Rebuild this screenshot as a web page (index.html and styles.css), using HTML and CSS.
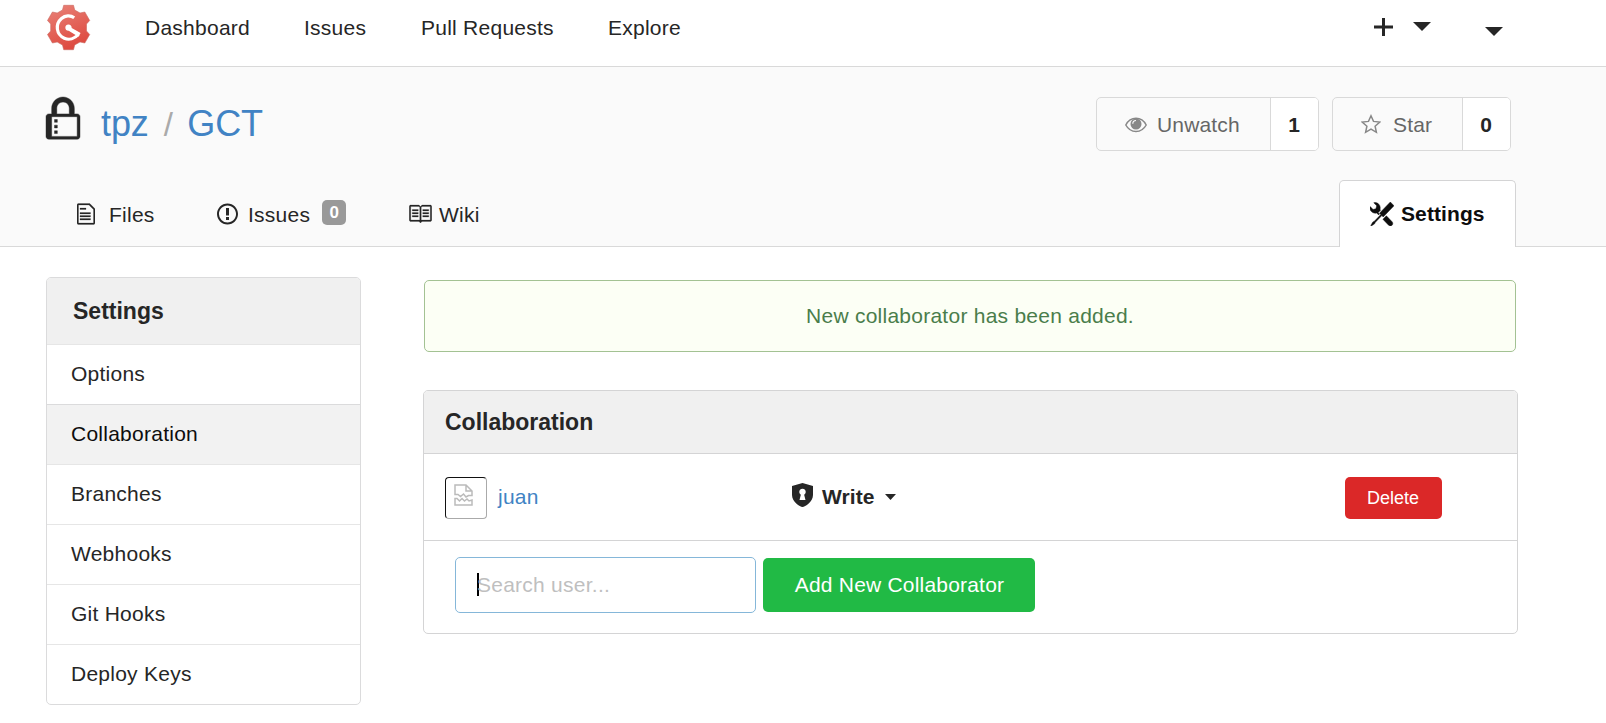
FILE: index.html
```html
<!DOCTYPE html>
<html lang="en">
<head>
<meta charset="utf-8">
<title>tpz/GCT - Collaboration</title>
<link rel="stylesheet" href="styles.css">
</head>
<body>
<nav class="navbar">
  <svg class="logo" viewBox="6 4 45 47">
    <defs><linearGradient id="red" x1="0" y1="0" x2="0.4" y2="1"><stop offset="0" stop-color="#e98379"/><stop offset="1" stop-color="#de4b41"/></linearGradient></defs>
    <path fill="url(#red)" stroke="#c9685f" stroke-width=".6" d="M23.700 5.300h9.800l1.200 4.700 5.300 3 4.800-1 4.900 8.500-3.200 3.500v7l3.200 3.500-4.900 8.500-4.800-1-5.300 3-1.200 4.700h-9.800l-1.200-4.700-5.300-3-4.800 1-4.900-8.500 3.200-3.500v-7l-3.200-3.500 4.900-8.500 4.800 1 5.300-3z"/>
    <path fill="none" stroke="#fff" stroke-width="3.200" d="M34.200 17.700C30.500 15 25.200 15.300 21.500 18.400C14.800 24.200 16.300 34.600 24.300 38.200C29 40.200 34.500 38.900 38.400 34.200"/>
    <path fill="#fff" d="M28.400 24.400a3.200 3.200 0 0 1 3.300 3.500l8.900 5.200-2.200 3.700-9.700-6a3.200 3.200 0 1 1-.3-6.400z"/>
  </svg>
  <a class="n-dash">Dashboard</a><a class="n-issues">Issues</a><a class="n-pulls">Pull Requests</a><a class="n-explore">Explore</a>
  <div class="nav-right">
    <svg class="plus" viewBox="0 0 19 18"><path d="M8 0h3v7.500h8v3h-8V18H8v-7.500H0v-3h8z"/></svg>
    <svg class="caret" viewBox="0 0 18 9"><path d="M0 0h18L9 9z"/></svg>
    <svg class="caret low" viewBox="0 0 18 9"><path d="M0 0h18L9 9z"/></svg>
  </div>
</nav>
<header class="repo">
  <div class="repo-top">
    <svg class="lock" viewBox="0 0 12 16" preserveAspectRatio="none"><path stroke="currentColor" stroke-width=".15" d="M4 13H3v-1h1v1zm8-6v7c0 .55-.45 1-1 1H1c-.55 0-1-.45-1-1V7c0-.55.45-1 1-1h1V4c0-2.200 1.800-4 4-4s4 1.800 4 4v2h1c.55 0 1 .45 1 1zM3.800 6h4.410V4c0-1.220-.98-2.200-2.200-2.200-1.220 0-2.200.98-2.200 2.200v2H3.800zM11 7H2v7h9V7zM4 8H3v1h1V8zm0 2H3v1h1v-1z"/></svg>
    <div class="repo-name"><a class="owner">tpz</a><span class="slash">/</span><a>GCT</a></div>
    <div class="repo-buttons">
      <div class="labeled watch"><span class="main">
        <svg class="eye" viewBox="0 0 22 16"><path fill="none" stroke="#888" stroke-width="1.500" d="M.8 8C5.500-1 16.500-1 21.200 8 16.500 16.600 5.500 16.600.8 8z"/><circle cx="11" cy="7" r="5.500" fill="#888"/><path fill="none" stroke="#fafafa" stroke-width="1.200" d="M7.800 6.800c0-2 1.300-3.300 3.200-3.300"/></svg>
        Unwatch</span><b>1</b></div>
      <div class="labeled star"><span class="main">
        <svg class="star-icon" viewBox="0 0 20 20"><path fill="none" stroke="#888" stroke-width="1.500" d="M10 1.800l2.500 5.600 6.300.7-4.700 4.100 1.300 6.100-5.400-3.100-5.400 3.100 1.300-6.100L1.200 8.100l6.300-.7z"/></svg>
        Star</span><b>0</b></div>
    </div>
  </div>
  <div class="tabs">
    <a class="tab t-files"><svg viewBox="0 0 12 16" width="18" height="24"><path stroke="currentColor" stroke-width=".15" d="M6 5H2V4h4v1zM2 8h7V7H2v1zm0 2h7V9H2v1zm0 2h7v-1H2v1zm10-7.500V14c0 .55-.45 1-1 1H1c-.55 0-1-.45-1-1V2c0-.55.45-1 1-1h7.500L12 4.500zM11 5L8 2H1v12h10V5z"/></svg>Files</a>
    <a class="tab t-issues"><svg viewBox="0 0 14 16" width="21" height="24"><path d="M7 2.300c3.140 0 5.700 2.560 5.700 5.700s-2.560 5.700-5.700 5.700A5.710 5.710 0 0 1 1.300 8c0-3.140 2.560-5.700 5.700-5.700zM7 1C3.140 1 0 4.140 0 8s3.140 7 7 7 7-3.140 7-7-3.140-7-7-7zm1 3H6v5h2V4zm0 6H6v2h2v-2z"/></svg>Issues<span class="count">0</span></a>
    <a class="tab t-wiki"><svg viewBox="1 0 15 16" width="23" height="24"><path stroke="currentColor" stroke-width=".15" d="M3 5h4v1H3V5zm0 3h4V7H3v1zm0 2h4V9H3v1zm11-5h-4v1h4V5zm0 2h-4v1h4V7zm0 2h-4v1h4V9zm2-6v9c0 .55-.45 1-1 1H9.500l-1 1-1-1H2c-.55 0-1-.45-1-1V3c0-.55.45-1 1-1h5.500l1 1 1-1H15c.55 0 1 .45 1 1zm-8 .5L7.500 3H2v9h6V3.500zm7-.5H9.500l-.5.5V12h6V3z"/></svg>Wiki</a>
    <a class="tab active"><svg viewBox="0 0 16 16" width="24" height="24"><path stroke="currentColor" stroke-width=".3" d="M4.480 7.270c.26.26 1.280 1.330 1.280 1.330l.56-.58-.88-.91 1.690-1.800s-.76-.74-.43-.45c.32-1.190.03-2.510-.87-3.440C4.930.5 3.660.2 2.520.51l1.930 2-.51 1.960-1.890.52-1.930-1.990C-.19 4.170.1 5.480 1 6.400c.94.98 2.290 1.260 3.480.87zm6.440 1.940l-2.330 2.300 3.840 3.980c.31.33.73.49 1.140.49.41 0 .82-.16 1.140-.49.63-.65.63-1.700 0-2.350l-3.790-3.930zM16 2.530L13.550 0 6.330 7.460l.88.91-4.310 4.460-.99.53-1.390 2.270.35.37 2.200-1.440.51-1.020L7.900 9.080l.88.91L16 2.530z"/></svg>Settings</a>
  </div>
</header>
<main class="content">
  <aside class="menu">
    <h4>Settings</h4>
    <a>Options</a><a class="active">Collaboration</a><a>Branches</a><a>Webhooks</a><a>Git Hooks</a><a>Deploy Keys</a>
  </aside>
  <section class="column">
    <div class="message">New collaborator has been added.</div>
    <div class="panel">
      <h4>Collaboration</h4>
      <div class="row">
        <span class="avatar"><svg viewBox="0 0 19 22" width="19" height="22"><g fill="none" stroke="#bbb" stroke-width="1.500"><path d="M1 10.500V1h11l6 6v4.500h-3.500L12 13 9.500 10 6.500 12.500 4 10.500zM12 1v6h6M1 21v-6.500h2l2.500 2.500 2.500-2.500 2.500 2.500 2.500-2 2 2 3-1V21z"/></g></svg></span>
        <a class="user">juan</a>
        <div class="access">
          <svg class="shield" viewBox="0 0 14 16"><path fill-rule="evenodd" d="M7 0L0 2v6.020C0 12.690 5.310 16 7 16s7-3.310 7-7.980V2zM5 11.300l.9-3.500a2.150 2.150 0 1 1 2.200 0l.9 3.500z"/></svg>
          <span>Write</span>
          <svg class="small-caret" viewBox="0 0 11 6"><path d="M0 0h11L5.500 6z"/></svg>
        </div>
        <button class="delete">Delete</button>
      </div>
      <div class="add-row">
        <div class="search"><i class="cursor"></i><span>Search user...</span></div>
        <button class="add">Add New Collaborator</button>
      </div>
    </div>
  </section>
</main>
</body>
</html>
```
FILE: styles.css
```css
* { box-sizing: border-box; }
body { margin: 0; height: 723px; overflow: hidden; background: #fff; color: #262626; font: 21px/24px "Liberation Sans", Arial, sans-serif; letter-spacing: .25px; }
svg { display: block; flex: none; fill: currentColor; }
h4 { margin: 0; font-size: 23px; letter-spacing: 0; background: #f0f0f0; }
button { border: 0; border-radius: 5px; color: #fff; font-family: inherit; letter-spacing: inherit; padding: 0; }

.navbar { display: flex; height: 67px; border-bottom: 1px solid #d9d9d9; line-height: 55px; padding-left: 46px; }
.logo { width: 45px; height: 47px; margin: 4px 54px 0 0; }
.n-dash { width: 159px; }
.n-issues { width: 117px; }
.n-pulls { width: 187px; }
.nav-right { display: flex; margin-left: auto; padding-right: 103px; }
.plus { width: 19px; height: 18px; margin-top: 18px; }
.caret { width: 18px; height: 9px; margin: 22px 0 0 20px; }
.caret.low { margin: 27px 0 0 54px; }

.repo { height: 180px; background: #fafafa; border-bottom: 1px solid #d9d9d9; padding: 30px 90px 0 46px; }
.repo-top { display: flex; height: 83px; }
.lock { width: 34px; height: 45px; overflow: visible; }
.repo-name { display: flex; margin-left: 21px; font-size: 36px; line-height: 53px; letter-spacing: -.1px; color: #4183c4; }
.slash { font-size: 33px; line-height: 55px; color: #aaa; margin: 0 14.500px 0 15px; }
.repo-buttons { display: flex; gap: 13px; margin-left: auto; padding-right: 5px; }
.labeled { display: flex; height: 54px; border: 1px solid #d9d9d9; border-radius: 5px; overflow: hidden; line-height: 54px; }
.labeled .main { display: flex; align-items: center; flex: 1; color: #666; letter-spacing: .15px; line-height: 24px; padding-top: 2px; }
.labeled b { width: 48px; border-left: 1px solid #d9d9d9; background: #fff; text-align: center; letter-spacing: 0; padding-right: 1px; }
.watch { width: 223px; }
.star { width: 179px; }
.eye { width: 22px; height: 16px; margin: -1px 10px 0 28px; }
.star-icon { width: 20px; height: 20px; margin: 0 12px 3px 28px; }
.tabs { display: flex; height: 67px; }
.tab { display: flex; align-items: flex-start; padding-top: 22px; line-height: 25px; }
.t-files { width: 140px; padding-left: 31px; }
.t-files svg { margin-right: 14px; }
.t-issues { width: 192px; padding-left: 31px; }
.t-issues svg { margin-right: 10px; }
.count { width: 24px; height: 25px; margin: -2px 0 0 12px; border-radius: 5px; background: #999; color: #fff; font-size: 17px; font-weight: bold; text-align: center; letter-spacing: 0; }
.t-wiki { padding-left: 31px; }
.t-wiki svg { margin-right: 7px; }
.tab.active { width: 177px; height: 67px; margin-left: auto; padding: 21px 0 0 30px; background: #fff; border: 1px solid #d4d4d5; border-bottom: 0; border-radius: 5px 5px 0 0; color: #0d0d0d; font-weight: bold; letter-spacing: .1px; line-height: 24px; }
.tab.active svg { margin-right: 7px; }

.content { display: flex; align-items: flex-start; padding: 30px 88px 0 46px; }
.menu { width: 315px; border: 1px solid #dbdbdc; border-radius: 5px; overflow: hidden; }
.menu h4 { height: 66px; line-height: 66px; padding-left: 26px; }
.menu a { display: block; height: 60px; border-top: 1px solid #e6e6e6; padding-left: 24px; line-height: 57px; }
.menu a.active { background: #f2f2f2; border-top-color: #dbdbdc; color: #0d0d0d; }
.column { width: 1095px; margin-left: 62px; padding-top: 3px; }
.message { width: 1092px; height: 72px; margin-left: 1px; border: 1px solid #a3c293; border-radius: 5px; background: #fcfff5; color: #4a7d4b; text-align: center; line-height: 69px; }
.panel { margin-top: 38px; height: 244px; border: 1px solid #d4d4d5; border-radius: 5px; overflow: hidden; }
.panel h4 { height: 63px; line-height: 62px; padding-left: 21px; border-bottom: 1px solid #d4d4d5; }
.row { display: flex; align-items: center; height: 87px; border-bottom: 1px solid #d4d4d5; padding: 1px 75px 0 21px; }
.avatar { width: 42px; height: 42px; border: 1.500px solid #111; border-right-color: #aaa; border-bottom-color: #aaa; border-radius: 4px; padding: 6px 0 0 8px; }
.user { width: 294px; margin-left: 11px; padding-bottom: 2px; color: #4183c4; }
.access { display: flex; align-items: center; font-weight: bold; letter-spacing: .1px; }
.access span { padding-bottom: 2px; }
.shield { width: 21px; height: 24px; margin: -6px 9px 0 0; }
.small-caret { width: 11px; height: 6px; margin: -2px 0 0 10px; }
.delete { width: 97px; height: 42px; margin-left: auto; background: #db2828; font-size: 18px; letter-spacing: 0; padding: 2px 1px 0 0; }
.add-row { display: flex; gap: 7px; padding: 16px 0 0 31px; }
.search { display: flex; align-items: center; width: 301px; height: 56px; border: 1px solid #85b7d9; border-radius: 5px; padding-left: 21px; color: #bfbfbf; }
.cursor { width: 2px; height: 23px; margin: -2px -2px 0 0; background: #000; }
.add { width: 272px; height: 54px; margin-top: 1px; background: #21ba45; font-size: 21px; letter-spacing: .2px; padding-left: 1px; }
```
